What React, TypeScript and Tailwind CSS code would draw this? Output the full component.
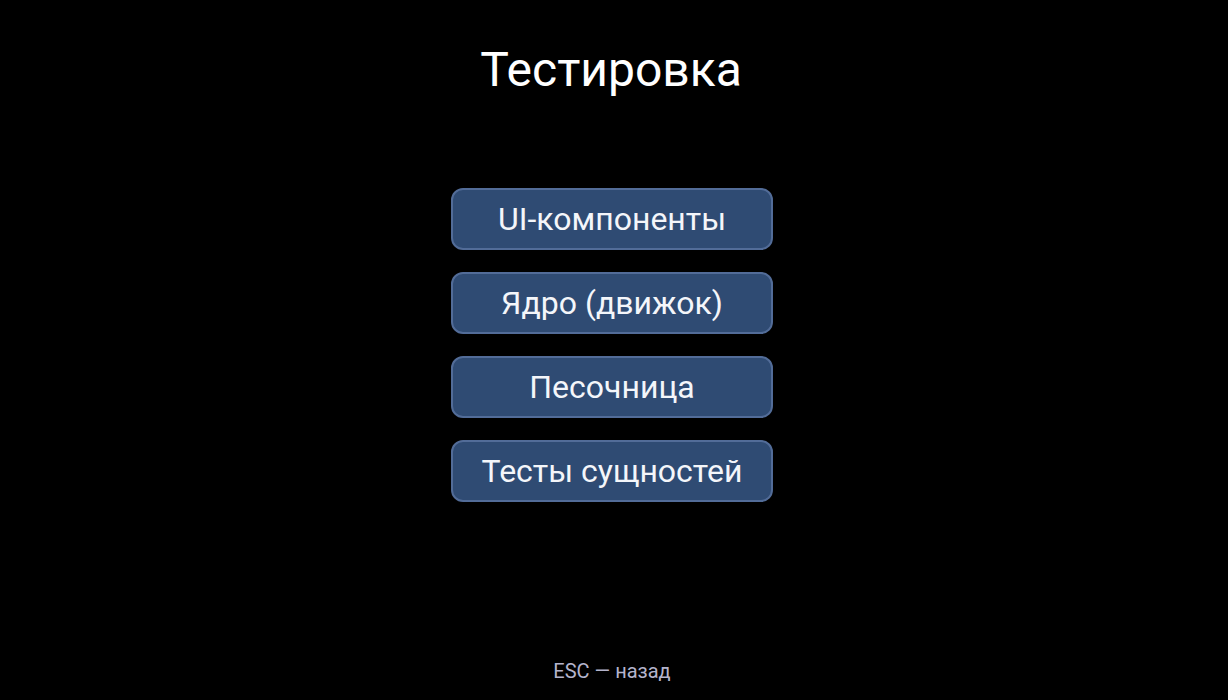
export default function App() {
  const items = ["UI-компоненты", "Ядро (движок)", "Песочница", "Тесты сущностей"]
  return (
    <div className="h-[700px] w-full bg-black pr-[4px] flex flex-col items-center font-['Roboto',sans-serif] text-white">
      <h1 className="mt-[46px] mr-[2px] text-[48px] leading-[48px]">Тестировка</h1>
      <div className="mt-[94px] flex flex-col gap-[22px]">
        {items.map((label) => (
          <button
            key={label}
            className="w-[322px] h-[62px] rounded-[12px] border-2 border-[#526c98] bg-[#2f4b73] text-[32px] text-[#f4f6fa]"
          >
            {label}
          </button>
        ))}
      </div>
      <div className="mt-auto mb-[17px] text-[20px] leading-[24px] text-[#b4b4cc]">ESC — назад</div>
    </div>
  )
}
